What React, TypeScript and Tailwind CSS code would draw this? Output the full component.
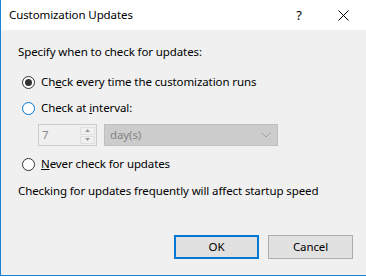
import React from "react";

function Radio({ checked, focus }: { checked?: boolean; focus?: boolean }) {
  return (
    <span
      className={`w-[13px] h-[13px] rounded-full border bg-white flex items-center justify-center shrink-0 ${
        focus ? "border-[#0078d7]" : "border-[#333333]"
      }`}
    >
      {checked && <span className="w-[7px] h-[7px] rounded-full bg-[#333333]" />}
    </span>
  );
}

export default function App() {
  return (
    <div
      className="w-[366px] h-[277px] bg-white overflow-hidden text-black tracking-[-0.1px]"
      style={{ fontFamily: '"Noto Sans", "Open Sans", sans-serif' }}
    >
      <div className="h-[276px] flex flex-col border-l border-b border-[#1883d7]">
        <div className="h-[30px] bg-white flex items-center pl-[8px] text-[11.5px] leading-[16px]">
          <span className="flex-1 pb-[1px]">Customization Updates</span>
          <span className="w-[10px] text-center mr-[34px] text-[13px]">?</span>
          <svg width="11" height="11" viewBox="0 0 11 11" className="mr-[17px]">
            <path d="M0.5 0.5 L10.5 10.5 M10.5 0.5 L0.5 10.5" stroke="#000" strokeWidth="1" />
          </svg>
        </div>
        <div className="flex-1 bg-[#f0f0f0] pl-[17px] pt-[14px] text-[11.5px] leading-[16px] flex flex-col">
          <div>Specify when to check for updates:</div>
          <div className="flex items-center mt-[14px] pl-[4px] gap-[6px]">
            <Radio checked />
            <span>
              Ch<span className="underline">e</span>ck every time the customization runs
            </span>
          </div>
          <div className="flex items-center mt-[10px] pl-[4px] gap-[6px]">
            <Radio focus />
            <span>
              Check at <span className="underline">i</span>nterval:
            </span>
          </div>
          <div className="flex mt-[8px] ml-[20px] gap-[7px]">
            <div className="w-[59px] h-[22px] border border-[#cccccc] bg-[#f0f0f0] flex items-center justify-between pl-[3px] pr-[1px]">
              <span className="text-[#8a8a8a]">7</span>
              <div className="flex flex-col gap-[1px]">
                <div className="w-[15px] h-[8px] border border-[#e0e0e0] flex items-center justify-center">
                  <svg width="5" height="3" viewBox="0 0 5 3">
                    <path d="M0 3 L2.5 0 L5 3 Z" fill="#9a9a9a" />
                  </svg>
                </div>
                <div className="w-[15px] h-[8px] border border-[#e0e0e0] flex items-center justify-center">
                  <svg width="5" height="3" viewBox="0 0 5 3">
                    <path d="M0 0 L2.5 3 L5 0 Z" fill="#9a9a9a" />
                  </svg>
                </div>
              </div>
            </div>
            <div className="w-[174px] h-[22px] border border-[#bfbfbf] bg-[#cccccc] flex items-center justify-between pl-[5px] pr-[6px]">
              <span className="text-[#838383]">day(s)</span>
              <svg width="10" height="6" viewBox="0 0 10 6">
                <path d="M0.5 0.5 L5 5 L9.5 0.5" stroke="#a0a0a0" strokeWidth="1" fill="none" />
              </svg>
            </div>
          </div>
          <div className="flex items-center mt-[10px] pl-[4px] gap-[6px]">
            <Radio />
            <span>
              <span className="underline">N</span>ever check for updates
            </span>
          </div>
          <div className="mt-[11px]">Checking for updates frequently will affect startup speed</div>
          <div className="flex justify-end gap-[9px] mt-[36px] pr-[13px]">
            <button className="w-[85px] h-[24px] border-2 border-[#0078d7] bg-[#e1e1e1] text-[11.5px] leading-[16px]">
              OK
            </button>
            <button className="w-[85px] h-[24px] border border-[#adadad] bg-[#e1e1e1] text-[11.5px] leading-[16px]">
              Cancel
            </button>
          </div>
        </div>
      </div>
    </div>
  );
}
